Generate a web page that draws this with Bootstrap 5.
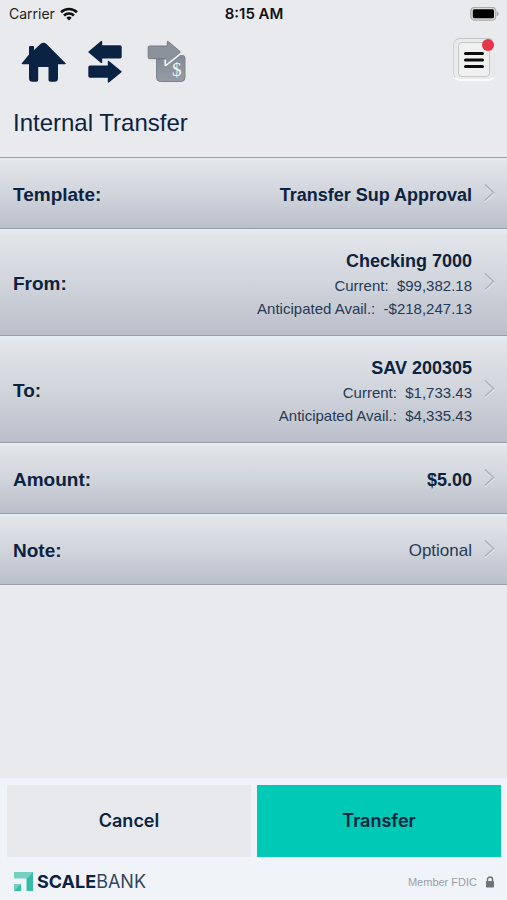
<!DOCTYPE html>
<html lang="en">
<head>
<meta charset="utf-8">
<meta name="viewport" content="width=device-width, initial-scale=1">
<title>Internal Transfer</title>
<link href="https://cdn.jsdelivr.net/npm/bootstrap@5.3.0/dist/css/bootstrap.min.css" rel="stylesheet">
<style>
body { background: #e9eaee; color: #0c2340; font-family: "Liberation Sans", Arial, sans-serif; }
svg { display: block; flex: none; }
.status { height: 28px; padding: 0 8px 0 9px; font: 400 14px/28px Inter, sans-serif; color: #222; }
.status .clock { font-size: 15px; font-weight: 600; color: #111; }
.toolbar { height: 62px; padding: 10px 12px 0 21px; }
.menu-btn { width: 42px; height: 42px; padding: 3px 4px; border: 1px solid #c9cacc; border-color: #c2c3c6 #e4e5e7 #fafafa #cfd0d2; border-radius: 7px; background: #e9eaec; box-shadow: 0 1px 1px #fff; }
.menu-face { width: 32px; height: 35px; border: 1px solid #c6c7c9; border-radius: 4px; background: #f0f0f1; }
.alert-dot { width: 12px; height: 12px; top: 0; right: 0; background: #e43548; }
.page-title { font-size: 24px; line-height: 28px; margin: 0; padding: 19px 13px 20px; }
.entry { min-height: 71px; padding: 2px 12px 0 13px; border: 0; border-top: 1px solid #989fa9; background: linear-gradient(#e6edf2, #e1e4e8 8%, #d1d5dc 50%, #babfca); color: #0c2340; text-align: left; }
.entry.tall { min-height: 107px; }
.entry-list { border-bottom: 1px solid #989fa9; }
.entry-name { font-size: 19px; line-height: 26px; font-weight: 700; padding-top: 2px; }
.entry-value { font-size: 18px; line-height: 26px; font-weight: 700; text-align: right; padding-top: 2px; }
.entry-detail { font-size: 15px; line-height: 23px; font-weight: 400; white-space: pre; color: #263a55; }
.entry-hint { font-size: 17px; font-weight: 400; color: #263a55; }
.chevron { margin-left: 12px; margin-bottom: 2px; }
.action-bar { background: #f0f4f8; padding: 7px 6px 0 7px; }
.action-pair { gap: 6px; }
.action { height: 72px; border: 0; border-radius: 0; color: #0c2340; font: 600 18px/24px Inter, sans-serif; }
.action.cancel { background: #e8e9ed; }
.action.send { background: #00c9b5; }
.brand-row { height: 43px; padding: 6px 6px 0 7px; }
.brand-name { font: 700 18px/20px Inter, sans-serif; }
.brand-name .thin { font-weight: 400; color: #35465f; }
.member { font: 400 11px/16px "Liberation Sans", Arial, sans-serif; color: #9a9ea7; }
</style>
</head>
<body>
<div class="d-flex flex-column min-vh-100">
  <div class="status row g-0 align-items-center">
    <div class="col d-flex align-items-center gap-1"><span>Carrier</span>
      <svg width="20" height="15" viewBox="0 0 20 15" fill="none" stroke="#111" stroke-width="2.6"><path d="M2 5.200a11.500 11.500 0 0 1 16 0M5 8.500a7.200 7.200 0 0 1 10 0"/><path d="M7.300 10.700a4 4 0 0 1 5.400 0L10 13.400z" fill="#111" stroke="none"/></svg>
    </div>
    <div class="col-auto clock">8:15 AM</div>
    <div class="col d-flex justify-content-end">
      <svg width="30" height="15" viewBox="0 0 30 15"><rect x="1.800" y=".3" width="25" height="12.900" rx="4" fill="#ddd" stroke="#aaa" stroke-width="1.300"/><rect x="3.800" y="2.300" width="21.200" height="9" rx="1.600" fill="#000"/><path d="M27.800 4.300v5q2-.8 2-2.500t-2-2.500z" fill="#aaa"/></svg>
    </div>
  </div>
  <header class="toolbar d-flex justify-content-between">
    <nav class="d-flex" aria-label="Sections">
      <a href="#" aria-label="Home" class="me-3"><svg width="46" height="46" viewBox="0 0 46 46" fill="#0a2342"><path d="M22.500 4.800q-1.600 0-3 1.300L13 12V8.800q0-.8-.8-.8H8.800q-.8 0-.8.8v7.800L.8 25.300q-.8 1 .6 1H8v14q0 3.500 3.500 3.500h4q1.700 0 1.700-1.700V29h10.300v13.100q0 1.700 1.700 1.700h4.300q3.500 0 3.500-3.500v-14h7q1.500 0 .6-1L25.500 6.100q-1.400-1.300-3-1.300z"/></svg></a>
      <a href="#" aria-label="Transfers" class="me-3"><svg width="46" height="46" viewBox="0 0 46 46" fill="#0a2342" stroke="#0a2342" stroke-width="1.400" stroke-linejoin="round"><path d="M6 14 18.500 3.600v4.400H37q1 0 1 1v9.800q0 1-1 1H18.500v4.600z"/><path d="M38 33.700 25.500 23.500v4.700H7q-1 0-1 1v8.900q0 1 1 1h18.500v4.900z"/></svg></a>
      <a href="#" aria-label="Transfer payment"><svg width="46" height="46" viewBox="-2 0 46 46"><defs><linearGradient id="steel" x2="0" y2="1"><stop stop-color="#838a93"/><stop offset="1" stop-color="#969ca5"/></linearGradient></defs><path d="M9.500 19v20.500q0 4 4 4H34q4 0 4-4V20q0-2.500-2.500-2.500h-4L19 27v-8z" fill="url(#steel)" stroke="#7d838c"/><path d="M2.500 8h17.800V4q0-1.200 1-.4L33 13.500q.8.700 0 1.400L19.300 26.200q-1 .8-1-.5v-5H2.500q-1.300 0-1.300-1.300V9.300Q1.200 8 2.500 8z" fill="#8c929b" stroke="#747b84"/><path d="M18.200 21.500v5.200q0 1.300 1.100.4l15-12" fill="none" stroke="#eef0f3" stroke-width="1.700"/><text x="25" y="37.500" font-family="Liberation Serif, serif" font-size="19" fill="#f2f4f6">$</text></svg></a>
    </nav>
    <button type="button" class="menu-btn position-relative" aria-label="Menu, new alerts">
      <span class="menu-face d-flex align-items-center justify-content-center"><svg width="20" height="18" viewBox="0 0 20 18" stroke="#0b0b0b" stroke-width="3" stroke-linecap="round"><path d="M1.500 2.500h17M1.500 9h17M1.500 15.500h17"/></svg></span>
      <span class="alert-dot position-absolute rounded-circle"></span>
    </button>
  </header>
  <h1 class="page-title fw-normal">Internal Transfer</h1>
  <main class="flex-grow-1">
    <div class="entry-list">
      <button type="button" class="entry w-100 d-flex align-items-center"><span class="entry-name">Template:</span><span class="entry-value ms-auto">Transfer Sup Approval</span><svg class="chevron" width="11" height="20" viewBox="0 0 11 20" fill="none"><path d="M1 2.500 10 11 1 19" stroke="#f3f3f3"/><path d="M1 1.500 9.500 9.500 1 17.500" stroke="#aeb0b3" stroke-width="1.500"/></svg></button>
      <button type="button" class="entry tall w-100 d-flex align-items-center"><span class="entry-name">From:</span><span class="entry-value ms-auto">Checking 7000<span class="entry-detail d-block">Current:  $99,382.18</span><span class="entry-detail d-block">Anticipated Avail.:  -$218,247.13</span></span><svg class="chevron" width="11" height="20" viewBox="0 0 11 20" fill="none"><path d="M1 2.500 10 11 1 19" stroke="#f3f3f3"/><path d="M1 1.500 9.500 9.500 1 17.500" stroke="#aeb0b3" stroke-width="1.500"/></svg></button>
      <button type="button" class="entry tall w-100 d-flex align-items-center"><span class="entry-name">To:</span><span class="entry-value ms-auto">SAV 200305<span class="entry-detail d-block">Current:  $1,733.43</span><span class="entry-detail d-block">Anticipated Avail.:  $4,335.43</span></span><svg class="chevron" width="11" height="20" viewBox="0 0 11 20" fill="none"><path d="M1 2.500 10 11 1 19" stroke="#f3f3f3"/><path d="M1 1.500 9.500 9.500 1 17.500" stroke="#aeb0b3" stroke-width="1.500"/></svg></button>
      <button type="button" class="entry w-100 d-flex align-items-center"><span class="entry-name">Amount:</span><span class="entry-value ms-auto">$5.00</span><svg class="chevron" width="11" height="20" viewBox="0 0 11 20" fill="none"><path d="M1 2.500 10 11 1 19" stroke="#f3f3f3"/><path d="M1 1.500 9.500 9.500 1 17.500" stroke="#aeb0b3" stroke-width="1.500"/></svg></button>
      <button type="button" class="entry w-100 d-flex align-items-center"><span class="entry-name">Note:</span><span class="entry-value entry-hint ms-auto">Optional</span><svg class="chevron" width="11" height="20" viewBox="0 0 11 20" fill="none"><path d="M1 2.500 10 11 1 19" stroke="#f3f3f3"/><path d="M1 1.500 9.500 9.500 1 17.500" stroke="#aeb0b3" stroke-width="1.500"/></svg></button>
    </div>
  </main>
  <footer class="action-bar">
    <div class="action-pair d-flex">
      <button type="button" class="action cancel flex-fill w-50">Cancel</button>
      <button type="button" class="action send flex-fill w-50">Transfer</button>
    </div>
    <div class="brand-row d-flex align-items-center justify-content-between">
      <div class="d-flex align-items-center gap-1">
        <svg width="19" height="19" viewBox="0 0 19 19"><path d="M0 0h19l-6.500 6.500H0z" fill="#72d2bf"/><path d="M19 0v19h-6.500V6.500z" fill="#35bda5"/><path d="M0 12h7v7H0z" fill="#35bda5"/><path d="M0 12h7l-7 7z" fill="#72d2bf"/></svg>
        <span class="brand-name">SCALE<span class="thin">BANK</span></span>
      </div>
      <div class="d-flex align-items-center gap-2 member"><span>Member FDIC</span>
        <svg width="10" height="12" viewBox="0 0 10 12"><path d="M2.500 5V3.500a2.500 2.500 0 0 1 5 0V5" fill="none" stroke="#6d727c" stroke-width="1.500"/><rect x="1" y="5" width="8" height="6.500" rx=".8" fill="#6d727c"/></svg>
      </div>
    </div>
  </footer>
</div>
<script src="https://cdn.jsdelivr.net/npm/bootstrap@5.3.0/dist/js/bootstrap.bundle.min.js"></script>
</body>
</html>
